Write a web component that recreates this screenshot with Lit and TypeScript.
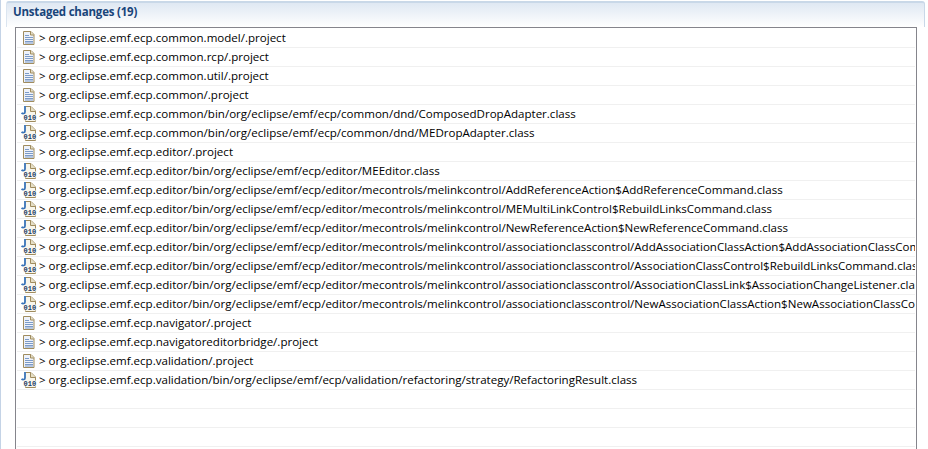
import { LitElement, html, css, svg } from "lit";
import { customElement } from "lit/decorators.js";

const P = "org.eclipse.emf.ecp.";
const ED = P + "editor/bin/org/eclipse/emf/ecp/editor/";
const MC = ED + "mecontrols/melinkcontrol/";
const AC = MC + "associationclasscontrol/";
const rows: [boolean, string][] = [
  [false, P + "common.model/.project"],
  [false, P + "common.rcp/.project"],
  [false, P + "common.util/.project"],
  [false, P + "common/.project"],
  [true, P + "common/bin/org/eclipse/emf/ecp/common/dnd/ComposedDropAdapter.class"],
  [true, P + "common/bin/org/eclipse/emf/ecp/common/dnd/MEDropAdapter.class"],
  [false, P + "editor/.project"],
  [true, ED + "MEEditor.class"],
  [true, MC + "AddReferenceAction$AddReferenceCommand.class"],
  [true, MC + "MEMultiLinkControl$RebuildLinksCommand.class"],
  [true, MC + "NewReferenceAction$NewReferenceCommand.class"],
  [true, AC + "AddAssociationClassAction$AddAssociationClassCommand.class"],
  [true, AC + "AssociationClassControl$RebuildLinksCommand.class"],
  [true, AC + "AssociationClassLink$AssociationChangeListener.class"],
  [true, AC + "NewAssociationClassAction$NewAssociationClassCommand.class"],
  [false, P + "navigator/.project"],
  [false, P + "navigatoreditorbridge/.project"],
  [false, P + "validation/.project"],
  [true, P + "validation/bin/org/eclipse/emf/ecp/validation/refactoring/strategy/RefactoringResult.class"],
  [false, ""],
  [false, ""],
  [false, ""],
];

const fileIcon = svg`<svg class="ic" width="16" height="16" viewBox="0 0 16 16">
  <path d="M2.5 1.5h7.5l3 3v10H2.5z" fill="#eef2fa" stroke="#a08c5e"/>
  <path d="M9.5 1.5v3.5h3.5" fill="#e6dfc6" stroke="#a08c5e"/>
  <path d="M4 5.5h4M4 7.5h8M4 9.5h8M4 11.5h8M4 13h8" stroke="#7c9bc8"/>
</svg>`;
const classIcon = svg`<svg class="ic" width="16" height="16" viewBox="0 0 16 16">
  <path d="M4.5 .5h5.5l4.5 4.5v10.5h-10V9" fill="#f8f6ec" stroke="#a08c5e"/>
  <path d="M9.5 .5v5h5" fill="#e6dfc6" stroke="#a08c5e"/>
  <path d="M4 0v6c0 2-2.6 2.2-3.4 .8" fill="none" stroke="#3a74b8" stroke-width="1.8"/>
  <rect x="2.5" y="8.5" width="13" height="6" fill="#f8f6ec"/>
  <text class="bits" x="2.6" y="14">010</text>
</svg>`;

@customElement("app-root")
export class AppRoot extends LitElement {
  static styles = css`
    :host { display: block; width: 928px; height: 449px; overflow: hidden; background: #fff;
      font-family: "Open Sans", "Liberation Sans", sans-serif; }
    .section { height: 449px; box-sizing: border-box; padding: 1px 3px 0 5px; border-left: 1px solid #c4d3e6; display: flex; flex-direction: column; }
    .head { flex: none; height: 26px; box-sizing: border-box; padding: 1px 0 0 6px;
      border-top: 2px solid #c9d8e8; border-left: 1px solid #dbe5f0; border-right: 1px solid #c9d8e8; border-radius: 3px 3px 0 0;
      background: linear-gradient(#dfe8f3, #fff);
      color: #19457a; font-size: 11.5px; letter-spacing: -0.2px; font-weight: 700; line-height: 16px; }
    .box { flex: 1; margin: 0 8px 0 9px; border: 1px solid #85858c; border-bottom: none; overflow: hidden; padding: 1px 1px 0 1px; }
    .row { height: 18px; border-bottom: 1px solid #f0f0f0; display: flex; align-items: center; white-space: nowrap; overflow: hidden; padding-left: 4px; font-size: 11.55px; color: #000; }
    .ic { flex: none; margin-right: 2px; }
    .bits { font-family: "Liberation Mono", monospace; font-size: 7px; font-weight: 700; fill: #1a3a66; }
    .txt { line-height: 18px; }
  `;
  render() {
    return html`<div class="section">
      <div class="head">Unstaged changes (19)</div>
      <div class="box">
        ${rows.map(([c, t]) => html`<div class="row">${t ? html`${c ? classIcon : fileIcon}<span class="txt">&gt; ${t}</span>` : ""}</div>`)}
      </div>
    </div>`;
  }
}
